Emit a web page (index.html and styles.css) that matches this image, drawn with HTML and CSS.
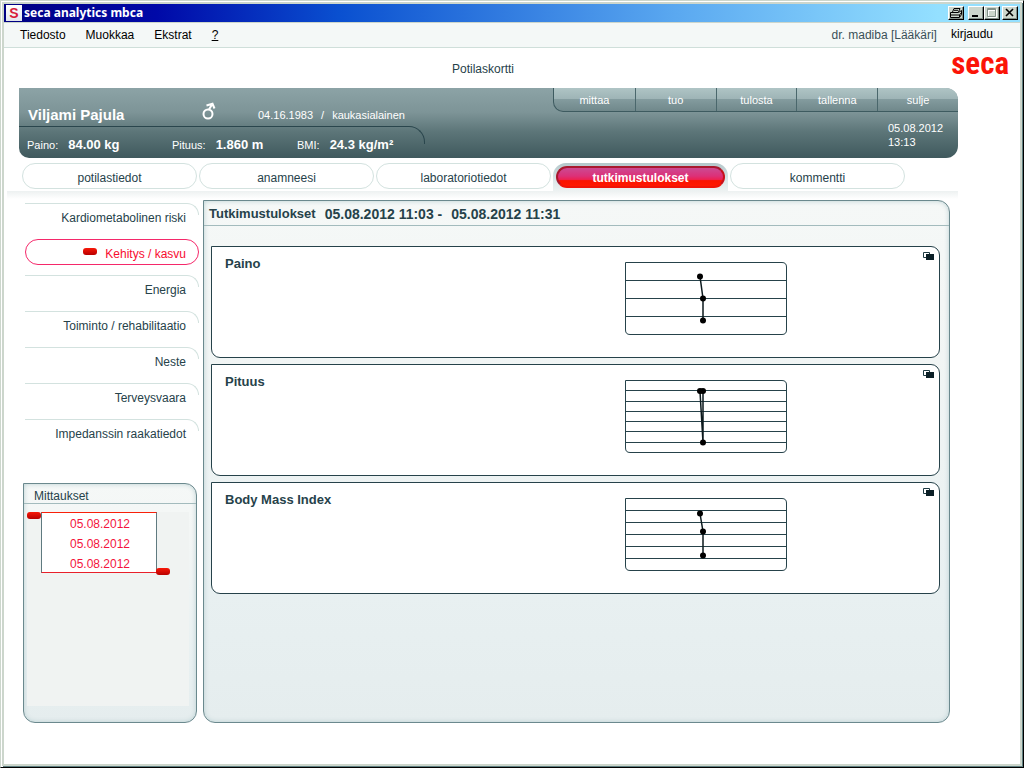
FILE: index.html
```html
<!DOCTYPE html>
<html lang="fi">
<head>
<meta charset="utf-8">
<title>seca analytics mbca</title>
<link rel="stylesheet" href="styles.css">
</head>
<body>
<div class="frame">
<div class="window">
  <header class="titlebar">
    <span class="app-icon">S</span>
    <h1 class="app-title">seca analytics mbca</h1>
    <div class="controls">
      <button class="control print" aria-label="Tulosta ikkuna"><svg width="14" height="12" viewBox="0 0 14 12"><path d="M3.500 5L5 1.500H11L9.500 5M1.500 5.500H9.500L12.500 3.500V7.500L10.500 10.500H1.500ZM1.500 8H10.500V10M10.500 8L12.500 5.500M5 3.300H9" fill="none" stroke="#000"/></svg></button>
      <button class="control" aria-label="Pienennä"><svg width="12" height="10" viewBox="0 0 12 10"><path d="M2 8h6" stroke="#000" stroke-width="2"/></svg></button>
      <button class="control" aria-label="Suurenna"><svg width="12" height="10" viewBox="0 0 12 10"><path d="M2.500 1.500h8v8h-8zM2 2.500h9" fill="none" stroke="#fff"/><path d="M1.500 .5h8v8h-8zM1 1.500h9" fill="none" stroke="#829088"/></svg></button>
      <button class="control close" aria-label="Sulje ikkuna"><svg width="12" height="10" viewBox="0 0 12 10"><path d="M2 1l7 7M9 1l-7 7" stroke="#000" stroke-width="1.600"/></svg></button>
    </div>
  </header>

  <nav class="menubar">
    <a href="#">Tiedosto</a>
    <a href="#">Muokkaa</a>
    <a href="#">Ekstrat</a>
    <a href="#" class="help">?</a>
    <span class="user">dr. madiba [Lääkäri]</span>
    <a href="#" class="login">kirjaudu</a>
  </nav>

  <div class="masthead">
    <h2 class="page-title">Potilaskortti</h2>
    <div class="logo">seca</div>
  </div>

  <main class="workspace">
    <section class="patient">
      <div class="patient-info">
        <div class="identity">
          <strong class="name">Viljami Pajula</strong>
          <svg class="sex" width="14" height="18" viewBox="0 0 14 18" role="img" aria-label="mies"><g fill="none" stroke="#fff" stroke-width="2"><circle cx="6" cy="12" r="4.500"/><path d="M7 7.500L10 2.500M4.500 3.500L10.500 1.800L12.500 6.500"/></g></svg>
          <span class="birth"><span>04.16.1983</span><span>/</span><span>kaukasialainen</span></span>
        </div>
        <dl class="stats">
          <div><dt>Paino:</dt><dd>84.00 kg</dd></div>
          <div><dt>Pituus:</dt><dd>1.860 m</dd></div>
          <div><dt>BMI:</dt><dd>24.3 kg/m²</dd></div>
        </dl>
      </div>
      <div class="patient-side">
        <div class="actions">
          <button>mittaa</button>
          <button>tuo</button>
          <button>tulosta</button>
          <button>tallenna</button>
          <button>sulje</button>
        </div>
        <p class="clock">05.08.2012<br>13:13</p>
      </div>
    </section>

    <nav class="tabs">
      <a href="#">potilastiedot</a>
      <a href="#">anamneesi</a>
      <a href="#">laboratoriotiedot</a>
      <a href="#" class="current"><span>tutkimustulokset</span></a>
      <a href="#">kommentti</a>
    </nav>

    <div class="columns">
      <aside class="side">
        <nav class="topics">
          <a href="#">Kardiometabolinen riski</a>
          <a href="#" class="current"><i class="knob"></i>Kehitys / kasvu</a>
          <a href="#">Energia</a>
          <a href="#">Toiminto / rehabilitaatio</a>
          <a href="#">Neste</a>
          <a href="#">Terveysvaara</a>
          <a href="#">Impedanssin raakatiedot</a>
        </nav>
        <section class="panel measurements">
          <h3>Mittaukset</h3>
          <div class="dates">
            <ul>
              <li>05.08.2012</li>
              <li>05.08.2012</li>
              <li>05.08.2012</li>
            </ul>
            <i class="knob from"></i>
            <i class="knob to"></i>
          </div>
        </section>
      </aside>

      <section class="panel results">
        <h3><span>Tutkimustulokset</span><span class="period">05.08.2012 11:03 -</span><span class="period">05.08.2012 11:31</span></h3>
        <div class="cards">
          <article class="card">
            <h4>Paino</h4>
            <svg class="chart" width="162" height="73" viewBox="0 0 162 73">
              <path class="grid" d="M.5 .5H157Q161.500 .5 161.500 5V68Q161.500 72.500 157 72.500H5Q.5 72.500 .5 68ZM0 18.500H162M0 36.500H162M0 54.500H162"/>
              <path class="trend" d="M75 14.500L78 36.500V58.500"/>
              <circle cx="75" cy="14.500" r="3"/><circle cx="78" cy="36.500" r="3"/><circle cx="78" cy="58.500" r="3"/>
            </svg>
            <button class="expand" aria-label="Avaa Paino"><svg width="11" height="8" viewBox="0 0 11 8"><path d="M.5 .5h6v5h-6z" fill="#fff" stroke="#1d3a42"/><path d="M3 2h8v6H3z" fill="#0b1f26"/></svg></button>
          </article>
          <article class="card">
            <h4>Pituus</h4>
            <svg class="chart" width="162" height="73" viewBox="0 0 162 73">
              <path class="grid" d="M.5 .5H157Q161.500 .5 161.500 5V68Q161.500 72.500 157 72.500H5Q.5 72.500 .5 68ZM0 10.500H162M0 21.500H162M0 31.500H162M0 41.500H162M0 51.500H162M0 62.500H162"/>
              <path class="trend" d="M75 11.500L78 62.500V11.500"/>
              <circle cx="75" cy="11" r="3"/><circle cx="78" cy="11" r="3"/><circle cx="78" cy="62.500" r="3"/>
            </svg>
            <button class="expand" aria-label="Avaa Pituus"><svg width="11" height="8" viewBox="0 0 11 8"><path d="M.5 .5h6v5h-6z" fill="#fff" stroke="#1d3a42"/><path d="M3 2h8v6H3z" fill="#0b1f26"/></svg></button>
          </article>
          <article class="card">
            <h4>Body Mass Index</h4>
            <svg class="chart" width="162" height="73" viewBox="0 0 162 73">
              <path class="grid" d="M.5 .5H157Q161.500 .5 161.500 5V68Q161.500 72.500 157 72.500H5Q.5 72.500 .5 68ZM0 12.500H162M0 24.500H162M0 36.500H162M0 48.500H162M0 60.500H162"/>
              <path class="trend" d="M75 15.500L78 33.500V57.500"/>
              <circle cx="75" cy="15.500" r="3"/><circle cx="78" cy="33.500" r="3"/><circle cx="78" cy="57.500" r="3"/>
            </svg>
            <button class="expand" aria-label="Avaa Body Mass Index"><svg width="11" height="8" viewBox="0 0 11 8"><path d="M.5 .5h6v5h-6z" fill="#fff" stroke="#1d3a42"/><path d="M3 2h8v6H3z" fill="#0b1f26"/></svg></button>
          </article>
        </div>
      </section>
    </div>
  </main>
</div>
</div>
</body>
</html>
```
FILE: styles.css
```css
*, *::before { box-sizing: border-box; }
body, h1, h2, h3, h4, p, ul, dl, dd { margin: 0; padding: 0; }
ul { list-style: none; }
a { color: inherit; text-decoration: none; }
button { font: inherit; color: inherit; border: 0; padding: 0; background: none; }

body {
  font: 12px/16px "Liberation Sans", Arial, sans-serif;
  color: #26424a;
  background: #fff;
}

/* window frame */
.frame {
  min-height: 100vh;
  display: flex;
  border: 1px solid #ccd6cc;
  border-right-color: #000;
  border-bottom-color: #000;
}
.window {
  flex: 1;
  min-width: 0;
  display: flex;
  flex-direction: column;
  border: 2px solid #ccd6cc;
  margin: 1px;
  box-shadow: 1px 1px 0 #5f7f80;
}

.titlebar {
  display: flex;
  align-items: center;
  height: 18px;
  padding: 0 2px;
  background: linear-gradient(90deg, #000082 0, #0009a8 15%, #0a50d0 33%, #5aa8f0 66%, #94e0ff 92%);
}
.app-icon {
  width: 16px;
  height: 16px;
  font: bold 14px/16px "Liberation Sans", sans-serif;
  text-align: center;
  color: #d81e3c;
  background: linear-gradient(#fff, #e2e6ee);
}
.app-title {
  margin-left: 2px;
  font: bold 12px/16px "Noto Sans", sans-serif;
  color: #fff;
}
.controls { display: flex; margin-left: auto; }
.control {
  width: 16px;
  height: 14px;
  display: flex;
  align-items: center;
  justify-content: center;
  background: #ccd6cc;
  border: 1px solid;
  border-color: #fff #000 #000 #fff;
  box-shadow: inset -1px -1px 0 #829088;
}
.control.print { margin-right: 4px; }
.control.close { margin-left: 2px; }

.menubar {
  display: flex;
  align-items: center;
  gap: 20px;
  height: 26px;
  padding: 0 27px 0 16px;
  border-top: 1px solid #ccd6cc;
  border-bottom: 1px solid #cfdfda;
  background: #f4f8f7;
  color: #000;
}
.help { text-decoration: underline; }
.user { margin-left: auto; color: #3a5058; }
.login { margin: 0 0 3px -6px; }

.masthead {
  display: grid;
  grid-template-columns: 1fr 62px;
  height: 40px;
  padding-left: 4px;
}
.page-title {
  justify-self: center;
  align-self: center;
  padding-top: 2px;
  font: 12px/16px "Liberation Sans", sans-serif;
}
.logo {
  align-self: center;
  justify-self: end;
  margin: 0 11px 8px 0;
  font: bold 31px/32px "Liberation Sans Narrow", "Roboto Condensed", "Open Sans Condensed", sans-serif;
  color: #fb1408;
}

.workspace {
  flex: 1;
  display: flex;
  flex-direction: column;
  margin: 0 62px 41px 3px;
}

/* patient header */
.patient {
  display: flex;
  justify-content: space-between;
  height: 70px;
  margin-left: 12px;
  border-radius: 0 12px 12px 10px;
  background: linear-gradient(#8ca3a6 0, #7d9497 35%, #5d7679 62%, #3f595d 100%);
  color: #fff;
  font-size: 11px;
  overflow: hidden;
}
.patient-info { width: 406px; }
.identity {
  display: grid;
  grid-template-columns: 174px 56px 1fr;
  align-items: end;
  height: 38px;
  padding: 0 0 3px 9px;
}
.name { font-size: 15px; line-height: 16px; }
.sex { margin-bottom: 3px; }
.birth { display: flex; gap: 8px; }
.stats {
  position: relative;
  display: grid;
  grid-template-columns: 145px 125px 1fr;
  height: 32px;
  padding: 11px 0 0 8px;
}
.stats::before {
  content: "";
  position: absolute;
  inset: 0 0 auto 0;
  height: 18px;
  border-top: 1px solid #2a464d;
  border-right: 1px solid #2a464d;
  border-top-right-radius: 16px;
}
.stats div { display: flex; gap: 10px; }
.stats dd { font-size: 13px; font-weight: bold; }
.patient-side { width: 405px; }
.actions {
  display: grid;
  grid-template-columns: repeat(5, 1fr);
  height: 24px;
  border: solid #3e5b60;
  border-width: 0 0 1px 1px;
  border-bottom-left-radius: 10px;
  background: linear-gradient(#afc4c5 0, #9db3b5 50%, #839b9e 50%, #70888b 100%);
  overflow: hidden;
}
.actions button + button { border-left: 1px solid #4a676c; }
.clock { margin: 9px 0 0 335px; line-height: 14px; }

/* tabs */
.tabs {
  display: grid;
  grid-template-columns: repeat(5, 175px);
  gap: 2px;
  padding: 5px 0 2px 15px;
}
.tabs a {
  height: 26px;
  padding-top: 1px;
  border: 1px solid #d3e2df;
  border-radius: 13px;
  line-height: 26px;
  text-align: center;
}
.tabs .current {
  height: 28px;
  margin-bottom: -2px;
  padding: 3px 3px 2px;
  border: 0;
  border-radius: 13px 13px 0 0;
  background: linear-gradient(#b3c7ca, #dbe6e8 60%, #edf2f2);
  color: #fff;
  font-weight: bold;
}
.tabs .current span {
  display: block;
  height: 22px;
  border: 2px solid #a8182e;
  border-right-color: #c8101c;
  border-bottom-color: #f01408;
  border-radius: 12px;
  line-height: 20px;
  background: linear-gradient(#cc4a92 0, #dc3078 45%, #ee2050 65%, #fa1400 70%, #ff1800 100%);
}

.columns {
  flex: 1;
  display: grid;
  grid-template-columns: 176px minmax(0, 1fr);
  gap: 4px;
  padding: 9px 8px 0 16px;
  background: linear-gradient(#edf1f1, #fff 8px) no-repeat;
}
.side {
  display: flex;
  flex-direction: column;
  padding-top: 3px;
}
.topics {
  display: grid;
  gap: 10px;
  padding-left: 2px;
  margin-bottom: 38px;
}
.topics a {
  position: relative;
  height: 26px;
  padding: 7px 13px 0 0;
  text-align: right;
}
.topics a::before {
  content: "";
  position: absolute;
  inset: 0 0 auto 0;
  height: 12px;
  border: solid #d3e2df;
  border-width: 1px 1px 0 0;
  border-top-right-radius: 12px;
}
.topics .current { color: #f80c30; }
.topics .current::before {
  height: 26px;
  border: 1px solid #f5286a;
  border-radius: 13px;
}
.knob {
  display: inline-block;
  width: 14px;
  height: 7px;
  border-radius: 3px;
  background: linear-gradient(#f81808, #b80000);
}
.topics .knob { margin: 0 8px 3px 0; }

/* panels */
.panel {
  border: 1px solid #6b898e;
  border-radius: 0 12px 12px 12px;
  background: linear-gradient(#f5f8f7, #f3f6f5 20%, #e8f0f1 75%, #e5edee);
  box-shadow: inset 0 0 5px #b9cfd2;
}
.measurements {
  flex: 1;
  margin-right: 2px;
  display: flex;
  flex-direction: column;
}
.measurements h3 {
  height: 20px;
  padding: 4px 0 0 10px;
  border-bottom: 1px solid #a3bbbd;
  font: 12px/16px "Liberation Sans", sans-serif;
}
.dates {
  position: relative;
  flex: 1;
  margin: 8px 7px 16px 3px;
  padding: 0 32px 0 14px;
  background: #f0f3f2;
}
.dates ul {
  padding-left: 2px;
  border: 1px solid #5f7a80;
  border-top-color: #f8200a;
  border-bottom-color: #e8202a;
  background: #fff;
}
.dates li {
  height: 20px;
  line-height: 22px;
  text-align: center;
  color: #f4143c;
}
.dates li:last-child { height: 19px; }
.from { position: absolute; left: 0; top: 0; }
.to { position: absolute; right: 19px; top: 56px; }

.results h3 {
  display: flex;
  gap: 9px;
  height: 25px;
  padding: 5px 0 0 5px;
  border-bottom: 1px solid #a3bbbd;
  font: bold 13px/16px "Liberation Sans", sans-serif;
}
.period { font-size: 14px; }
.cards {
  display: grid;
  gap: 6px;
  padding: 20px 9px 0 7px;
}
.card {
  position: relative;
  display: flex;
  height: 112px;
  padding: 15px 152px 0 13px;
  border: 1px solid #26424a;
  border-radius: 0 9px 9px 9px;
  background: #fff;
}
.card h4 {
  flex: 1;
  margin-top: -6px;
  font: bold 13px/16px "Liberation Sans", sans-serif;
}
.grid { fill: none; stroke: #26424a; }
.trend { fill: none; stroke: #0c1a1e; stroke-width: 1.5; }
.expand {
  position: absolute;
  top: 5px;
  right: 5px;
  display: flex;
}
```
